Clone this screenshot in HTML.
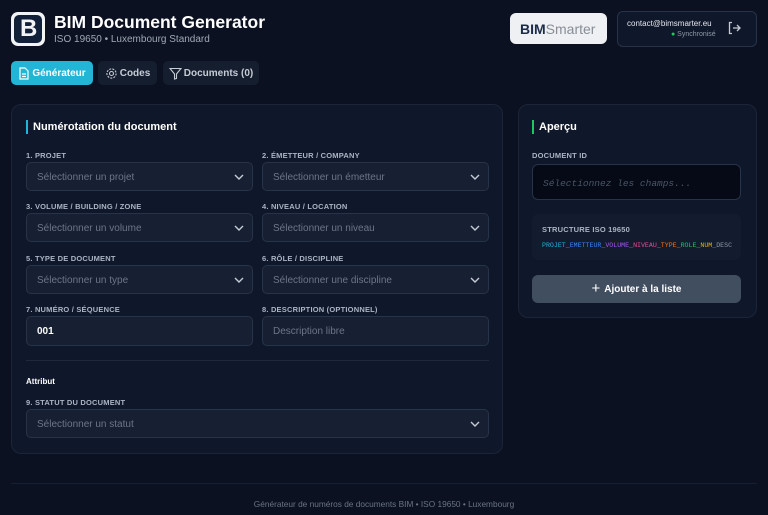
<!DOCTYPE html>
<html><head><meta charset="utf-8">
<style>
*{box-sizing:border-box;margin:0;padding:0}
body{width:768px;height:515px;overflow:hidden;background:#0b1120;font-family:"Liberation Sans",sans-serif;color:#e5e7eb;position:relative}
.abs{position:absolute}
.card{position:absolute;background:#0f172a;border:1px solid #1b2537;border-radius:10px}
.lbl{position:absolute;font-size:7.5px;font-weight:bold;color:#aab4c3;letter-spacing:.2px}
.inp{position:absolute;height:29px;background:#172033;border:1px solid #273348;border-radius:5px;font-size:10px;color:#6b7688;padding:9px 0 0 10px}
.inp svg{position:absolute;right:8px;top:11px}
.tab{position:absolute;top:61px;height:24px;border-radius:5px;background:#151e2e;font-size:10px;font-weight:bold;color:#c6ccd6;display:flex;align-items:center;justify-content:center;gap:2px}
.h{position:absolute;font-size:11px;font-weight:bold;color:#fff}
.bar{position:absolute;width:2px;height:14px}
</style></head><body>
<!-- logo -->
<div class="abs" style="left:11px;top:12px;width:34px;height:34px;background:#f3f4f6;border-radius:7px"></div>
<div class="abs" style="left:14px;top:15px;width:28px;height:28px;background:#12203a;border-radius:5px"></div>
<div class="abs" style="left:20px;top:17px;font-size:24px;font-weight:bold;color:#f3f4f6;line-height:24px">B</div>
<div class="abs" style="left:54px;top:12px;font-size:17.5px;font-weight:bold;color:#fff">BIM Document Generator</div>
<div class="abs" style="left:54px;top:34px;font-size:10px;color:#a0a8b5">ISO 19650 • Luxembourg Standard</div>
<!-- right header -->
<div class="abs" style="left:510px;top:13px;width:97px;height:31px;background:#eef0f3;border-radius:6px;font-size:14px;color:#888d96;padding:8px 0 0 10px"><b style="color:#1c2b4a">BIM</b>Smarter</div>
<div class="abs" style="left:617px;top:11px;width:140px;height:36px;border:1px solid #273348;border-radius:6px;background:#0f172a"></div>
<div class="abs" style="left:627px;top:19px;font-size:8px;color:#e5e7eb">contact@bimsmarter.eu</div>
<div class="abs" style="left:671px;top:31px;font-size:7px;color:#8e97a5"><span style="color:#22c55e">●</span> Synchronisé</div>
<svg class="abs" style="left:727px;top:21px" width="14" height="14" viewBox="0 0 14 14" fill="none" stroke="#c6ccd6" stroke-width="1.3"><path d="M5 1.5H2.5v11H5M6 7h7M10 4l3 3-3 3"/></svg>
<!-- tabs -->
<div class="tab" style="left:11px;width:82px;background:#22b5d6;color:#fff">
<svg width="12" height="13" viewBox="0 0 12 13" fill="none" stroke="#fff" stroke-width="1.2"><path d="M2 1h5l3 3v8H2z M4 7h4M4 9.5h4"/></svg>Générateur</div>
<div class="tab" style="left:98px;width:59px">
<svg width="13" height="13" viewBox="0 0 13 13" fill="none" stroke="#c6ccd6" stroke-width="1.1"><circle cx="6.5" cy="6.5" r="2"/><circle cx="6.5" cy="6.5" r="4.6" stroke-dasharray="2 1.2"/></svg>Codes</div>
<div class="tab" style="left:163px;width:96px">
<svg width="13" height="13" viewBox="0 0 13 13" fill="none" stroke="#c6ccd6" stroke-width="1.1"><path d="M1 1.5h11L7.5 7v4.5L5.5 12V7z"/></svg>Documents (0)</div>
<!-- left card -->
<div class="card" style="left:11px;top:104px;width:492px;height:350px"></div>
<div class="bar" style="left:26px;top:120px;background:#22b5d6"></div>
<div class="h" style="left:33px;top:121px">Numérotation du document</div>
<div class="lbl" style="left:26px;top:151px">1. PROJET</div>
<div class="lbl" style="left:262px;top:151px">2. ÉMETTEUR / COMPANY</div>
<div class="inp" style="left:26px;top:162px;width:227px">Sélectionner un projet<svg width="10" height="7"><path d="M1 1l4 4 4-4" stroke="#c6ccd6" fill="none" stroke-width="1.4"/></svg></div>
<div class="inp" style="left:262px;top:162px;width:227px">Sélectionner un émetteur<svg width="10" height="7"><path d="M1 1l4 4 4-4" stroke="#c6ccd6" fill="none" stroke-width="1.4"/></svg></div>
<div class="lbl" style="left:26px;top:202px">3. VOLUME / BUILDING / ZONE</div>
<div class="lbl" style="left:262px;top:202px">4. NIVEAU / LOCATION</div>
<div class="inp" style="left:26px;top:213px;width:227px">Sélectionner un volume<svg width="10" height="7"><path d="M1 1l4 4 4-4" stroke="#c6ccd6" fill="none" stroke-width="1.4"/></svg></div>
<div class="inp" style="left:262px;top:213px;width:227px">Sélectionner un niveau<svg width="10" height="7"><path d="M1 1l4 4 4-4" stroke="#c6ccd6" fill="none" stroke-width="1.4"/></svg></div>
<div class="lbl" style="left:26px;top:254px">5. TYPE DE DOCUMENT</div>
<div class="lbl" style="left:262px;top:254px">6. RÔLE / DISCIPLINE</div>
<div class="inp" style="left:26px;top:265px;width:227px">Sélectionner un type<svg width="10" height="7"><path d="M1 1l4 4 4-4" stroke="#c6ccd6" fill="none" stroke-width="1.4"/></svg></div>
<div class="inp" style="left:262px;top:265px;width:227px">Sélectionner une discipline<svg width="10" height="7"><path d="M1 1l4 4 4-4" stroke="#c6ccd6" fill="none" stroke-width="1.4"/></svg></div>
<div class="lbl" style="left:26px;top:305px">7. NUMÉRO / SÉQUENCE</div>
<div class="lbl" style="left:262px;top:305px">8. DESCRIPTION (OPTIONNEL)</div>
<div class="inp" style="left:26px;top:316px;width:227px;height:30px;color:#fff;font-weight:bold">001</div>
<div class="inp" style="left:262px;top:316px;width:227px;height:30px">Description libre</div>
<div class="abs" style="left:26px;top:360px;width:463px;height:1px;background:#1e293b"></div>
<div class="abs" style="left:26px;top:377px;font-size:8px;font-weight:bold;color:#fff">Attribut</div>
<div class="lbl" style="left:26px;top:398px">9. STATUT DU DOCUMENT</div>
<div class="inp" style="left:26px;top:409px;width:463px">Sélectionner un statut<svg width="10" height="7"><path d="M1 1l4 4 4-4" stroke="#c6ccd6" fill="none" stroke-width="1.4"/></svg></div>
<!-- right card -->
<div class="card" style="left:518px;top:104px;width:239px;height:214px"></div>
<div class="bar" style="left:532px;top:120px;background:#22c55e"></div>
<div class="h" style="left:539px;top:121px">Aperçu</div>
<div class="lbl" style="left:532px;top:151px">DOCUMENT ID</div>
<div class="abs" style="left:532px;top:164px;width:209px;height:36px;background:#050a16;border:1px solid #273348;border-radius:6px;font-family:'Liberation Mono',monospace;font-style:italic;font-size:9.5px;color:#4b5565;padding:13px 0 0 10px">Sélectionnez les champs...</div>
<div class="abs" style="left:532px;top:214px;width:209px;height:46px;background:#131c2e;border-radius:6px"></div>
<div class="lbl" style="left:542px;top:225px">STRUCTURE ISO 19650</div>
<div class="abs" style="left:542px;top:242px;font-family:'Liberation Mono',monospace;font-size:6.6px;color:#8e97a5;white-space:nowrap"><span style="color:#22b5d6">PROJET</span>_<span style="color:#3b82f6">EMETTEUR</span>_<span style="color:#a855f7">VOLUME</span>_<span style="color:#ec4899">NIVEAU</span>_<span style="color:#f97316">TYPE</span>_<span style="color:#22c55e">ROLE</span>_<span style="color:#eab308">NUM</span>_DESC</div>
<div class="abs" style="left:532px;top:275px;width:209px;height:28px;background:#414e60;border-radius:6px;font-size:10px;font-weight:bold;color:#fff;display:flex;align-items:center;justify-content:center;gap:4px"><span style="font-size:15px;font-weight:normal;line-height:10px">+</span> Ajouter à la liste</div>
<!-- footer -->
<div class="abs" style="left:11px;top:483px;width:746px;height:1px;background:#162033"></div>
<div class="abs" style="left:0;top:499px;width:768px;text-align:center;font-size:8.3px;color:#6b7483">Générateur de numéros de documents BIM • ISO 19650 • Luxembourg</div>
</body></html>
